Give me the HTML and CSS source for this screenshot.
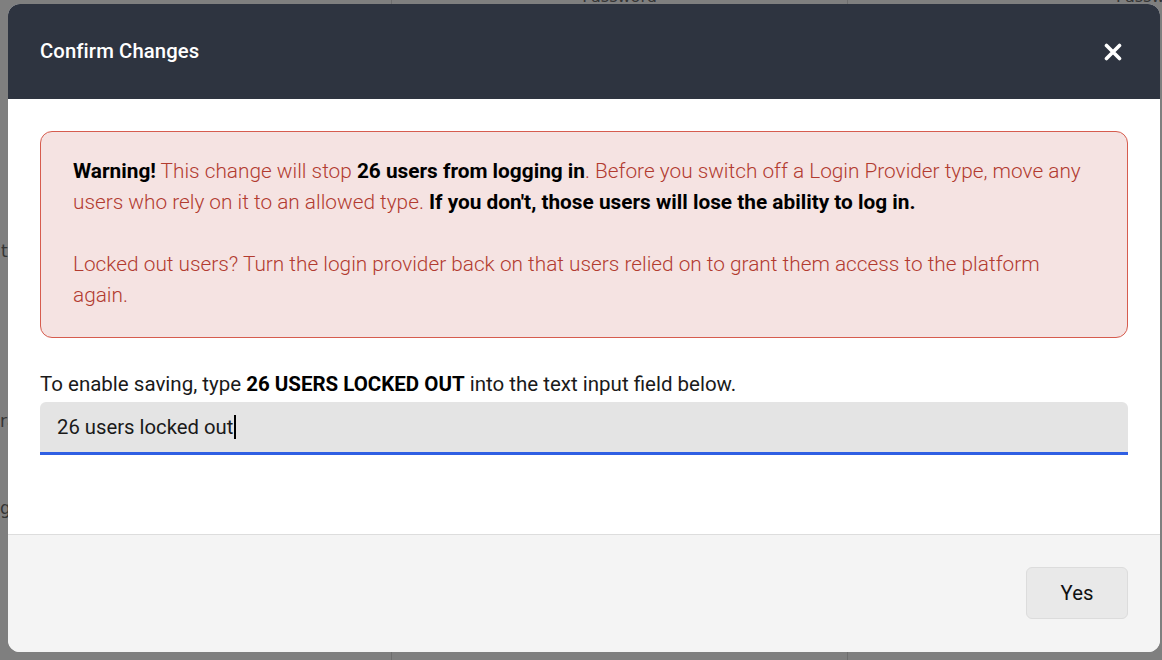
FILE: index.html
```html
<!DOCTYPE html>
<html lang="en">
<head>
<meta charset="utf-8">
<title>Confirm Changes</title>
<link rel="stylesheet" href="styles.css">
</head>
<body>
<div class="backdrop">
  <div class="bg-col bg-col-1">
    <p class="bg-text bg-t1">t</p>
    <p class="bg-text bg-t2">ra</p>
    <p class="bg-text bg-t3">ge</p>
  </div>
  <div class="bg-col bg-col-2"><span class="bg-head">Password</span></div>
  <div class="bg-col bg-col-3"><span class="bg-head bg-head-r">Password</span></div>
</div>
<div class="overlay">
  <div class="modal" role="dialog" aria-labelledby="modal-title">
    <header class="modal-header">
      <h2 id="modal-title" class="modal-title">Confirm Changes</h2>
      <button class="close-btn" aria-label="Close">
        <svg width="18" height="18" viewBox="0 0 18 18" aria-hidden="true">
          <path d="M2.5 2.5 L15.5 15.5 M15.5 2.5 L2.5 15.5" stroke="#ffffff" stroke-width="3.6" stroke-linecap="round" fill="none"/>
        </svg>
      </button>
    </header>
    <div class="modal-body">
      <div class="alert">
        <p><b>Warning!</b> This change will stop <b>26 users from logging in</b>. Before you switch off a Login Provider type, move any users who rely on it to an allowed type. <b>If you don't, those users will lose the ability to log in.</b></p>
        <p>Locked out users? Turn the login provider back on that users relied on to grant them access to the platform again.</p>
      </div>
      <label class="confirm-label" for="confirm-input">To enable saving, type <b>26 USERS LOCKED OUT</b> into the text input field below.</label>
      <div class="text-input" id="confirm-input">26 users locked out<span class="caret"></span></div>
    </div>
    <footer class="modal-footer">
      <button class="yes-btn">Yes</button>
    </footer>
  </div>
</div>
</body>
</html>
```

FILE: styles.css
```css
* { box-sizing: border-box; }
html, body { margin: 0; padding: 0; }
body {
  width: 1162px;
  height: 660px;
  overflow: hidden;
  position: relative;
  font-family: Roboto, "Liberation Sans", Arial, sans-serif;
  background: #ffffff;
}

/* underlying page (dimmed) */
.backdrop {
  display: grid;
  grid-template-columns: 391px 456px 315px;
  height: 660px;
}
.bg-col { position: relative; overflow: hidden; }
.bg-col-2, .bg-col-3 { border-left: 1px solid #dcdcdc; }
.bg-head {
  display: block;
  margin-top: -13px;
  text-align: center;
  font-family: "DejaVu Sans", sans-serif;
  font-size: 16px;
  color: #6a6a6a;
}
.bg-head-r { text-align: left; padding-left: 268px; }
.bg-text {
  margin: 0;
  font-family: "DejaVu Sans", sans-serif;
  font-size: 17px;
  color: #6a6a6a;
  padding-left: 1px;
}
.bg-t1 { margin-top: 241px; }
.bg-t2 { margin-top: 150px; padding-left: 0; }
.bg-t3 { margin-top: 67px; padding-left: 0; }

.overlay {
  position: absolute;
  inset: 0;
  background: rgba(0, 0, 0, 0.5);
  padding: 4px 2px 8px 8px;
}

.modal {
  width: 1152px;
  height: 648px;
  background: #ffffff;
  border-radius: 12px;
  overflow: hidden;
  display: flex;
  flex-direction: column;
}

.modal-header {
  height: 95px;
  flex: none;
  background: #2e3440;
  display: flex;
  align-items: center;
  justify-content: space-between;
  padding: 0 38px 2px 32px;
}
.modal-title {
  margin: 0;
  color: #ffffff;
  font-size: 20.3px;
  font-weight: 500;
  letter-spacing: 0.1px;
}
.close-btn {
  background: none;
  border: 0;
  padding: 0;
  width: 18px;
  height: 18px;
  display: block;
  margin-top: 2px;
  cursor: pointer;
}
.close-btn svg { display: block; }

.modal-body {
  flex: 1;
  padding: 32px 32px 0 32px;
}

.alert {
  background: #f5e3e2;
  border: 1px solid #d65c4e;
  border-radius: 12px;
  padding: 24px 40px 26px 32px;
  color: #b23b30;
  font-size: 20.8px;
  font-weight: 300;
  line-height: 31px;
}
.alert p { margin: 0; }
.alert p + p { margin-top: 31px; }
.alert b { color: #000000; font-weight: 700; }

.confirm-label {
  display: block;
  margin-top: 33px;
  font-size: 20.5px;
  line-height: 26px;
  color: #1a1a1a;
}
.confirm-label b { font-weight: 700; color: #000; }

.text-input {
  margin-top: 5px;
  height: 53px;
  background: #e4e4e4;
  border-bottom: 3px solid #2f5fe3;
  border-radius: 6px 6px 0 0;
  padding: 0 17px;
  display: flex;
  align-items: center;
  font-size: 20.3px;
  color: #1a1a1a;
}
.caret {
  display: inline-block;
  width: 2px;
  height: 24px;
  background: #000;
  margin-left: 1px;
}

.modal-footer {
  flex: none;
  height: 118px;
  background: #f4f4f4;
  border-top: 1px solid #dddddd;
  display: flex;
  justify-content: flex-end;
  align-items: flex-start;
  padding: 32px 32px 0 0;
}
.yes-btn {
  width: 102px;
  height: 52px;
  background: #e9e9e9;
  border: 1px solid #dcdcdc;
  border-radius: 6px;
  font-family: Roboto, "Liberation Sans", Arial, sans-serif;
  font-size: 20.3px;
  color: #111111;
  cursor: pointer;
}
```
